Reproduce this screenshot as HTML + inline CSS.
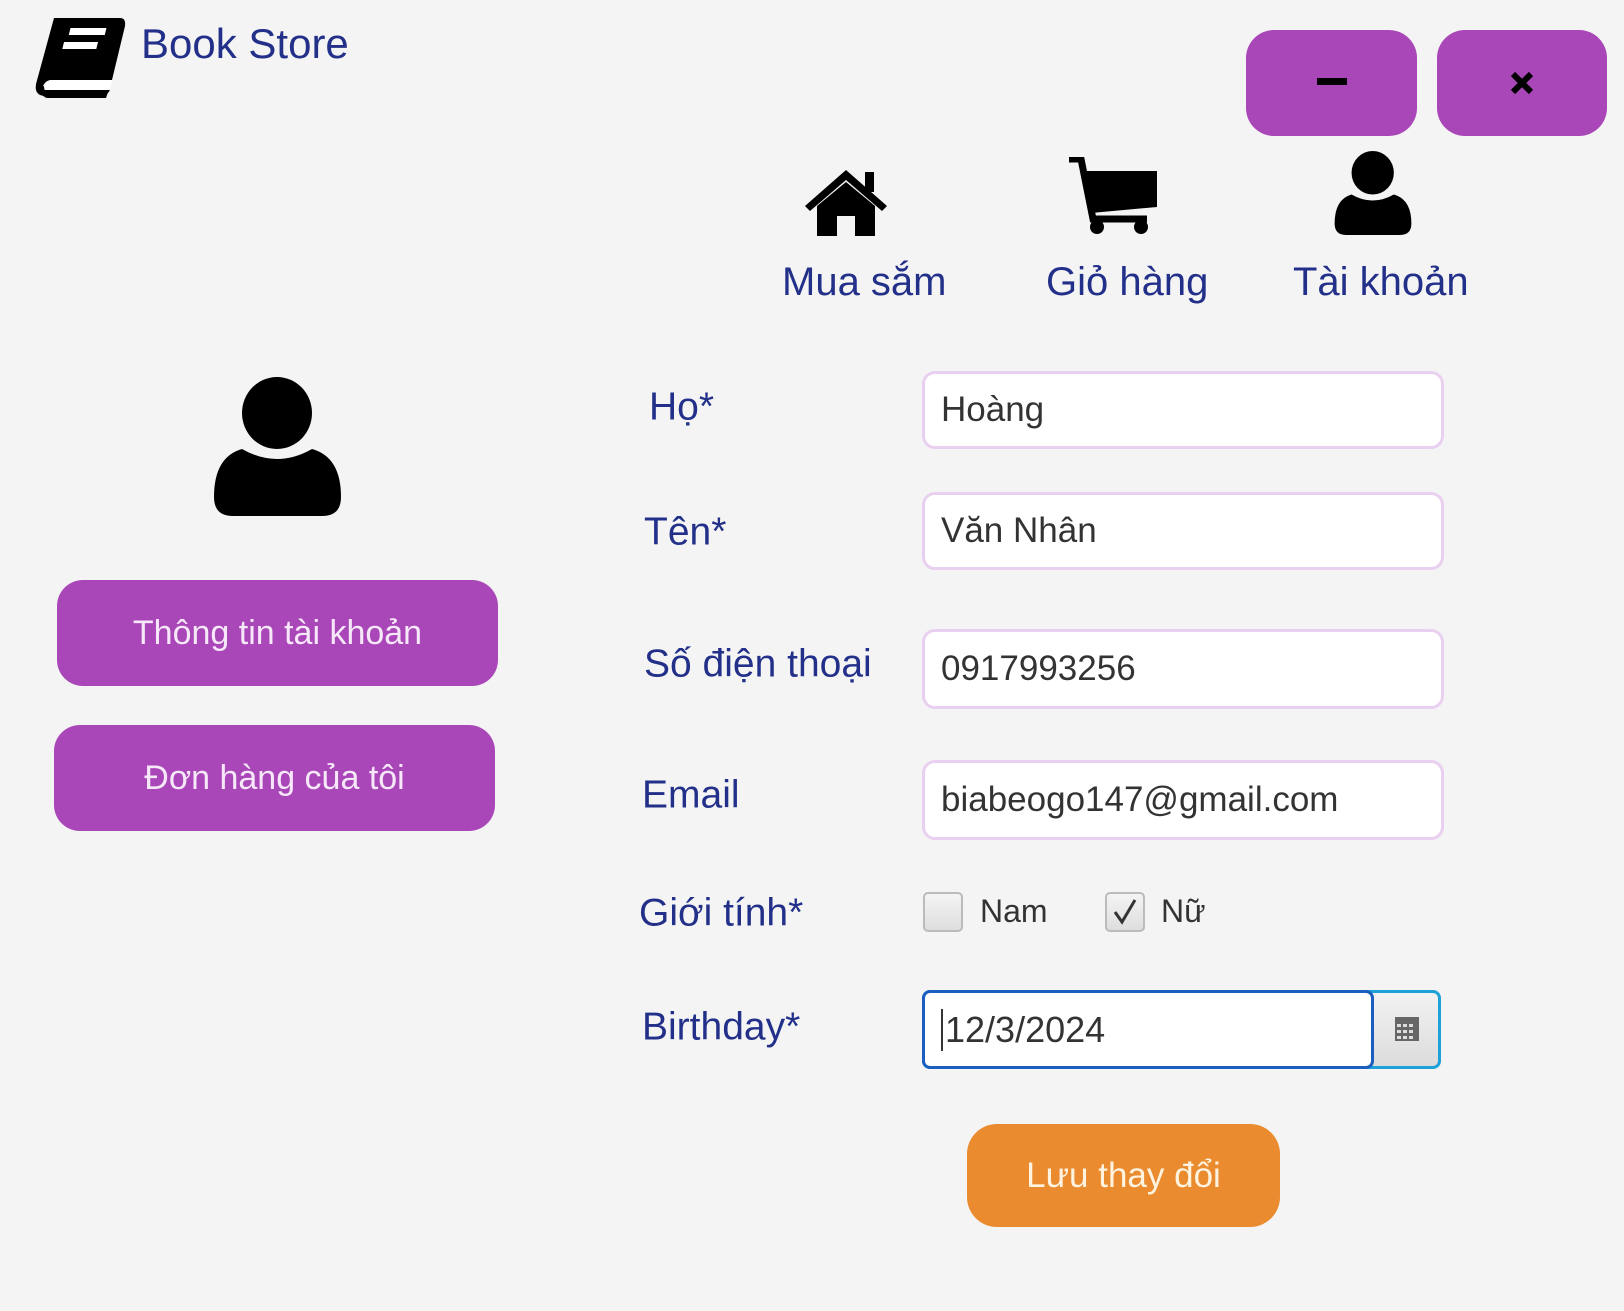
<!DOCTYPE html>
<html><head><meta charset="utf-8"><style>
body{margin:0;width:1624px;height:1311px;background:#f4f4f4;position:relative;overflow:hidden;font-family:"Liberation Sans","DejaVu Sans",sans-serif}
.a{position:absolute}
.navy{color:#23308a}
.btn{position:absolute;background:#a946b8;border-radius:26px;color:#f6e8f8;font-size:34px;display:flex;align-items:center;justify-content:center}
.lbl{position:absolute;color:#23308a;font-size:39px;line-height:1;transform:translateY(-50%)}
.inp{position:absolute;left:922px;width:522px;background:#fff;border:3px solid #ead0f0;border-radius:13px;box-sizing:border-box;font-size:35px;color:#333;padding-left:16px;display:flex;align-items:center}
.nl{position:absolute;top:260px;font-size:40px;color:#23308a}
.cb{position:absolute;width:40px;height:40px;box-sizing:border-box;border:2px solid #bbb;border-radius:5px;background:linear-gradient(#f4f4f4,#dedede)}
</style></head><body>
<svg class="a" style="left:34px;top:14px" width="92" height="86" viewBox="0 0 92 86">
<path d="M20 4 H86 Q92 4 91 12 L78 66 H18 Q10 66 8 76 H76 L72 82 H12 Q0 82 2 70 Z" fill="#000"/>
<path d="M8 76 Q10 66 18 66 H78 L76 76 Z" fill="#fff"/>
<path d="M6 74 Q8 84 14 84 H72 L74 78 H14 Q10 78 10 72 Z" fill="#000"/>
<rect x="40" y="14" width="36" height="7" fill="#fff" transform="skewX(-14)"/>
<rect x="37" y="28" width="34" height="7" fill="#fff" transform="skewX(-14)"/>
</svg>
<div class="a navy" style="left:141px;top:20px;font-size:42px">Book Store</div>
<div class="btn" style="left:1246px;top:30px;width:171px;height:106px;border-radius:28px"><div style="width:30px;height:7px;background:#000;margin-top:-4px"></div></div>
<div class="btn" style="left:1437px;top:30px;width:170px;height:106px;border-radius:28px"><svg width="24" height="24" viewBox="0 0 24 24"><path d="M3 3 L21 21 M21 3 L3 21" stroke="#000" stroke-width="6"/></svg></div>
<svg class="a" style="left:803px;top:166px" width="86" height="70" viewBox="0 0 86 70">
<path d="M43 4 L84 40 L79 45 L43 14 L7 45 L2 40 Z" fill="#000"/><rect x="62" y="6" width="9" height="20" fill="#000"/>
<path d="M14 40 L43 16 L72 40 V70 H52 V50 H34 V70 H14 Z" fill="#000"/></svg>
<svg class="a" style="left:1067px;top:157px" width="92" height="78" viewBox="0 0 92 78">
<path d="M2 2 H14 L26 62 H80" stroke="#000" stroke-width="7" fill="none"/>
<path d="M16 14 H90 V50 L24 56 Z" fill="#000"/>
<circle cx="30" cy="70" r="7" fill="#000"/><circle cx="74" cy="70" r="7" fill="#000"/></svg>
<svg class="a" style="left:1334px;top:151px" width="78" height="84" viewBox="0 0 127 139">
<ellipse cx="63" cy="36" rx="35" ry="36" fill="#000"/>
<path d="M28 72 Q63 92 98 72 Q127 80 127 120 Q127 139 108 139 H19 Q0 139 0 120 Q0 80 28 72 Z" fill="#000"/></svg>
<div class="nl" style="left:782px">Mua sắm</div>
<div class="nl" style="left:1046px">Giỏ hàng</div>
<div class="nl" style="left:1293px">Tài khoản</div>
<svg class="a" style="left:214px;top:377px" width="127" height="139" viewBox="0 0 127 139">
<ellipse cx="63" cy="36" rx="35" ry="36" fill="#000"/>
<path d="M28 72 Q63 92 98 72 Q127 80 127 120 Q127 139 108 139 H19 Q0 139 0 120 Q0 80 28 72 Z" fill="#000"/></svg>
<div class="btn" style="left:57px;top:580px;width:441px;height:106px">Thông tin tài khoản</div>
<div class="btn" style="left:54px;top:725px;width:441px;height:106px">Đơn hàng của tôi</div>
<div class="lbl" style="left:649px;top:407px">Họ*</div>
<div class="lbl" style="left:644px;top:532px">Tên*</div>
<div class="lbl" style="left:644px;top:664px">Số điện thoại</div>
<div class="lbl" style="left:642px;top:795px">Email</div>
<div class="lbl" style="left:639px;top:913px">Giới tính*</div>
<div class="lbl" style="left:642px;top:1027px">Birthday*</div>
<div class="inp" style="top:371px;height:78px">Hoàng</div>
<div class="inp" style="top:492px;height:78px">Văn Nhân</div>
<div class="inp" style="top:629px;height:80px">0917993256</div>
<div class="inp" style="top:760px;height:80px">biabeogo147@gmail.com</div>
<div class="cb" style="left:923px;top:892px"></div>
<div class="a" style="left:980px;top:893px;font-size:32px;color:#333">Nam</div>
<div class="cb" style="left:1105px;top:892px"></div>
<svg class="a" style="left:1111px;top:898px" width="28" height="28" viewBox="0 0 28 28"><path d="M4 14 L11 24 L24 2" stroke="#333" stroke-width="3" fill="none"/></svg>
<div class="a" style="left:1161px;top:893px;font-size:32px;color:#333">Nữ</div>
<div class="a" style="left:922px;top:990px;width:519px;height:79px;box-sizing:border-box;border:3px solid #1ea0d8;border-radius:8px;background:linear-gradient(#f2f2f2,#dcdcdc)"></div>
<div class="a" style="left:922px;top:990px;width:452px;height:79px;box-sizing:border-box;border:3px solid #1a5fbf;border-radius:8px;background:#fff;font-size:36px;color:#333;display:flex;align-items:center;padding-left:16px"><span style="border-left:2px solid #333;padding-left:2px">12/3/2024</span></div>
<svg class="a" style="left:1395px;top:1017px" width="24" height="24" viewBox="0 0 24 24"><rect width="24" height="24" fill="#666"/><g fill="#ddd"><rect x="2" y="7" width="4" height="3"/><rect x="8" y="7" width="4" height="3"/><rect x="14" y="7" width="4" height="3"/><rect x="2" y="13" width="4" height="3"/><rect x="8" y="13" width="4" height="3"/><rect x="14" y="13" width="4" height="3"/><rect x="2" y="19" width="4" height="3"/><rect x="8" y="19" width="4" height="3"/><rect x="14" y="19" width="4" height="3"/></g></svg>
<div class="btn" style="left:967px;top:1124px;width:313px;height:103px;background:#e98b2e;border-radius:30px;color:#fff3e0;font-size:35px">Lưu thay đổi</div>
</body></html>
